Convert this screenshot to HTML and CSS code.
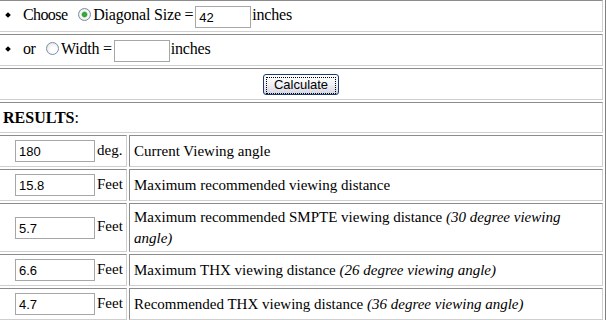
FILE: index.html
```html
<!DOCTYPE html>
<html lang="en">
<head>
  <meta charset="UTF-8">
  <title>Viewing Distance Calculator</title>
  <link rel="stylesheet" href="styles.css">
</head>
<body>
  <table class="calc">
    <col class="c1">
    <col class="c2">
    <tr>
      <td colspan="2" class="opt">
        <span class="dot"></span><span class="lbl">Choose</span>
        <input type="radio" name="mode" class="radio" checked>Diagonal Size = <input type="text" class="box small" value="42">inches
      </td>
    </tr>
    <tr>
      <td colspan="2" class="opt">
        <span class="dot"></span><span class="lbl">or</span>
        <input type="radio" name="mode" class="radio">Width = <input type="text" class="box small">inches
      </td>
    </tr>
    <tr>
      <td colspan="2" class="center"><button class="btn"><span>Calculate</span></button></td>
    </tr>
    <tr>
      <td colspan="2" class="head"><b>RESULTS</b>:</td>
    </tr>
    <tr>
      <td class="val"><input type="text" class="box" value="180">deg.</td>
      <td>Current Viewing angle</td>
    </tr>
    <tr>
      <td class="val"><input type="text" class="box" value="15.8">Feet</td>
      <td>Maximum recommended viewing distance</td>
    </tr>
    <tr class="tall">
      <td class="val"><input type="text" class="box" value="5.7">Feet</td>
      <td>Maximum recommended SMPTE viewing distance <i>(30 degree viewing angle)</i></td>
    </tr>
    <tr>
      <td class="val"><input type="text" class="box" value="6.6">Feet</td>
      <td>Maximum THX viewing distance <i>(26 degree viewing angle)</i></td>
    </tr>
    <tr>
      <td class="val"><input type="text" class="box" value="4.7">Feet</td>
      <td>Recommended THX viewing distance <i>(36 degree viewing angle)</i></td>
    </tr>
  </table>
</body>
</html>
```

FILE: styles.css
```css
body { margin: 0; background: #fff; color: #000; font-family: "Liberation Serif", "Times New Roman", serif; font-size: 15px; overflow: hidden; }
.calc { width: 611px; margin: -3px 0 0 -5px; table-layout: fixed; border-collapse: separate; border-spacing: 2px;
  border: 1px solid; border-color: #d0d0d0 #808080 #808080 #d0d0d0; }
.c1 { width: 129px; }
.calc td { height: 32px; padding: 0 3px 0 4px; box-sizing: border-box; vertical-align: middle; white-space: normal;
  border: 1px solid; border-color: #8c8c8c #cfcfcf #cfcfcf #8c8c8c; line-height: 21px; }
.calc .tall td { height: 49px; }
.calc td.opt { padding-left: 7px; white-space: nowrap; font-size: 16px; letter-spacing: -0.2px; }
.calc td.center { text-align: center; }
.calc td.head { height: 31px; padding-left: 4px; font-size: 16px; }
.calc td.val { padding-left: 16px; padding-right: 0; white-space: nowrap; }
.dot { display: inline-block; width: 4px; height: 4px; background: #000; transform: rotate(45deg); vertical-align: 3px; margin-right: 13px; }
.lbl { margin-right: 4px; letter-spacing: -0.6px; }
.box { width: 80px; height: 22px; box-sizing: border-box; margin: 0 2px 0 0; padding: 1px 3px 0; vertical-align: middle;
  border: 1px solid #a7a7a7; font-family: "Liberation Sans", Arial, sans-serif; font-size: 13px; letter-spacing: 0; color: #000; background: #fff; }
.box.small { width: 56px; margin: 0 1px 0 -2px; }
.radio { appearance: none; -webkit-appearance: none; width: 13px; height: 13px; margin: 0 2px 0 3px; vertical-align: -1px;
  border: 1px solid #7b8ea6; border-radius: 50%; background: radial-gradient(circle at 60% 65%, #fff 30%, #dcdcdc 100%); }
.radio:checked { background: radial-gradient(circle, #3fbb3f 0, #2a9a2a 2px, #fff 3.5px, #f2f2f2 60%, #d8d8d8 100%); }
.btn { width: 76px; height: 21px; padding: 2px; border: 1px solid #1c3b73; border-radius: 3px; vertical-align: middle;
  background: linear-gradient(#ffffff, #f3f3f7 45%, #d6d5e4); font-family: "Liberation Sans", Arial, sans-serif; font-size: 13px; color: #000; }
.btn span { display: block; height: 15px; line-height: 14px; border: 1px dotted #000; }
```
